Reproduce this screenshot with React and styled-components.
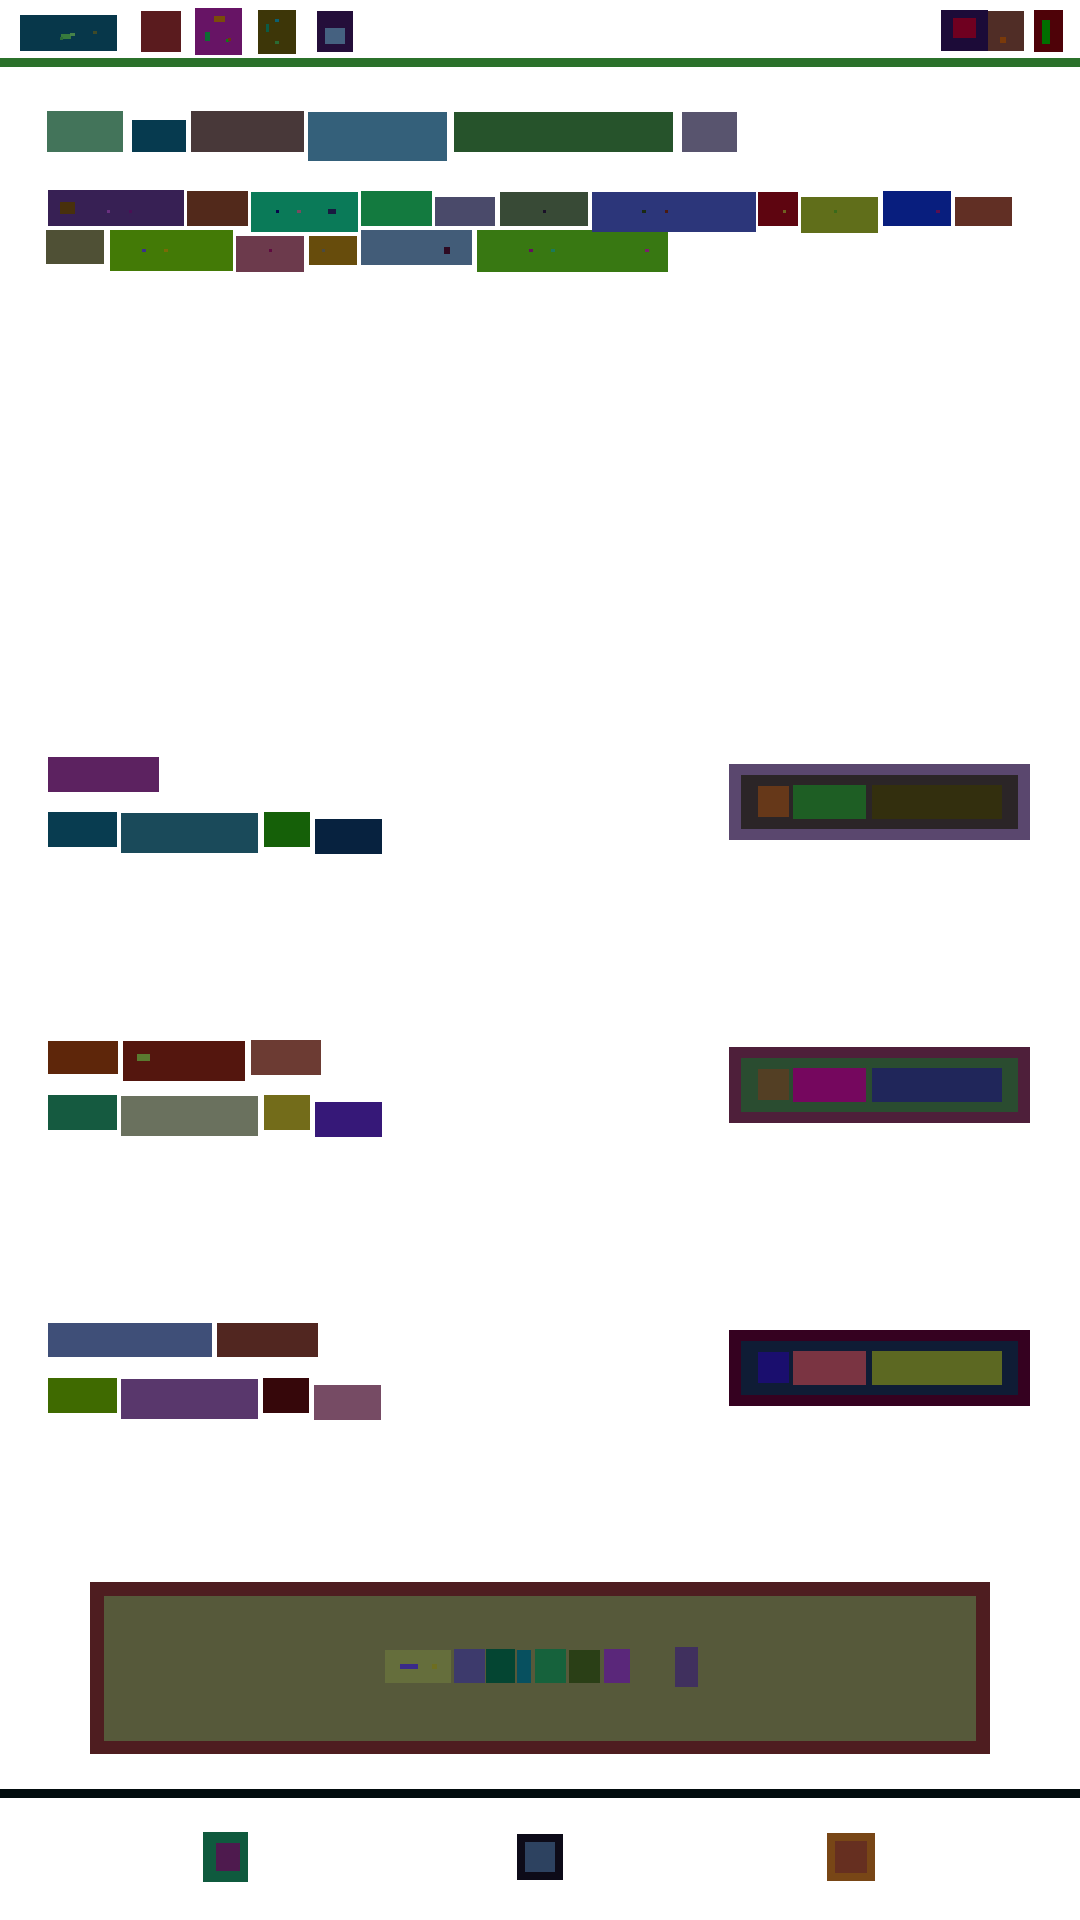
import React from "react";
import styled, { createGlobalStyle, css } from "styled-components";

const Global = createGlobalStyle`
  html, body { margin: 0; padding: 0; background: #ffffff; }
  #root { width: 1080px; }
`;

const tile = css`
  flex: none;
  display: flex;
  align-items: flex-start;
  box-sizing: border-box;
  width: ${(p) => p.$w}px;
  height: ${(p) => p.$h}px;
  margin-left: ${(p) => p.$ml}px;
  margin-top: ${(p) => p.$mt}px;
  background: ${(p) => p.$c};
`;

const Page = styled.div`
  display: flex;
  flex-direction: column;
  width: 1080px;
  height: 1920px;
  overflow: hidden;
  background: #ffffff;
`;
const Header = styled.header`
  flex: none;
  display: flex;
  justify-content: space-between;
  align-items: flex-start;
  height: 58px;
  padding: 0 17px 0 20px;
`;
const Nav = styled.nav`
  display: flex;
  align-items: flex-start;
`;
const NavTile = styled.div`${tile}`;
const Mark = styled.span`${tile}`;
const Rule = styled.div`
  flex: none;
  height: 9px;
  background: ${(p) => p.$c};
`;
const Hero = styled.section`
  flex: none;
  display: flex;
  flex-direction: column;
  height: 690px;
  padding: 44px 0 0 0;
  box-sizing: border-box;
`;
const Line = styled.div`
  position: relative;
  z-index: ${(p) => p.$z || 0};
  flex: none;
  display: flex;
  align-items: flex-start;
  height: ${(p) => p.$h}px;
`;
const Word = styled.div`${tile}`;
const Feature = styled.section`
  flex: none;
  display: flex;
  justify-content: space-between;
  align-items: flex-start;
  height: ${(p) => p.$h}px;
  padding-right: 50px;
`;
const Copy = styled.div`
  display: flex;
  flex-direction: column;
`;
const Preview = styled.div`
  flex: none;
  box-sizing: border-box;
  width: 301px;
  height: 76px;
  margin-top: 7px;
  padding: 11px 12px;
  background: ${(p) => p.$c};
`;
const PreviewInner = styled.div`
  display: flex;
  align-items: flex-start;
  width: 277px;
  height: 54px;
  background: ${(p) => p.$c};
`;
const PreviewCell = styled.div`${tile}`;
const Banner = styled.section`
  flex: none;
  box-sizing: border-box;
  width: 900px;
  height: 172px;
  margin: 0 0 35px 90px;
  padding: 14px;
  background: #4e1d20;
`;
const BannerInner = styled.div`
  display: flex;
  align-items: flex-start;
  width: 872px;
  height: 145px;
  background: #56593a;
`;
const BannerItem = styled.div`${tile}`;
const Footer = styled.footer`
  flex: none;
  display: flex;
  align-items: flex-start;
  height: 122px;
`;
const FootIcon = styled.div`${tile}`;

function flow(Comp, list, ox, oy) {
  let cursor = ox;
  return list.map(([x0, x1, y0, y1, c, marks], i) => {
    const el = (
      <Comp key={i} $w={x1 - x0} $h={y1 - y0} $c={c} $ml={x0 - cursor} $mt={y0 - oy}>
        {marks ? flow(Mark, marks, x0, y0) : null}
      </Comp>
    );
    cursor = x1;
    return el;
  });
}

const navLeft = [
  [20, 117, 15, 51, "#07374a", [
    [61, 71, 34, 39, "#377a3d"],
    [70, 75, 33, 36, "#46824a"],
    [60, 63, 37, 40, "#2a6a38"],
    [93, 97, 31, 34, "#3f4a28"],
  ]],
  [141, 181, 11, 52, "#5a1b1e"],
  [195, 242, 8, 55, "#671465", [
    [205, 210, 32, 41, "#0e6c33"],
    [214, 225, 16, 22, "#7a4c0a"],
    [226, 229, 39, 42, "#0f7a1a"],
    [228, 231, 38, 41, "#6f3510"],
  ]],
  [258, 296, 10, 54, "#3d3608", [
    [266, 269, 24, 32, "#0c5b45"],
    [275, 279, 19, 22, "#0d6070"],
    [275, 279, 41, 44, "#2a6b33"],
  ]],
  [317, 353, 11, 52, "#240e3a", [[325, 345, 28, 44, "#456180"]]],
];
const navRight = [
  [941, 988, 10, 51, "#1c0b38", [[953, 976, 18, 38, "#6f0020"]]],
  [988, 1024, 11, 51, "#502d26", [[1000, 1006, 37, 43, "#7a3a0a"]]],
  [1034, 1063, 10, 52, "#4e0208", [[1042, 1050, 20, 44, "#006f00"]]],
];

const heroA = [
  [47, 123, 111, 152, "#43745a"],
  [132, 186, 120, 152, "#063a4f"],
  [191, 304, 111, 152, "#483839"],
  [308, 447, 112, 161, "#34607a"],
  [454, 673, 112, 152, "#26532b"],
  [682, 737, 112, 152, "#58546e"],
];
const heroB = [
  [48, 184, 190, 226, "#372054", [
    [60, 75, 202, 214, "#48300c"],
    [107, 110, 210, 213, "#6a3080"],
    [129, 132, 210, 213, "#4a0f55"],
  ]],
  [187, 248, 191, 226, "#52291b"],
  [251, 358, 192, 232, "#0a7a58", [
    [276, 279, 210, 213, "#05064a"],
    [297, 301, 210, 213, "#7a4a60"],
    [328, 336, 209, 214, "#181a40"],
  ]],
  [361, 432, 191, 226, "#137a3f"],
  [435, 495, 197, 226, "#4a4a6a"],
  [500, 588, 192, 226, "#384a36", [[543, 546, 210, 213, "#1a1028"]]],
  [592, 756, 192, 232, "#2c367a", [
    [642, 646, 210, 213, "#1a2a12"],
    [665, 668, 210, 213, "#4a1a10"],
  ]],
  [758, 798, 192, 226, "#5e0510", [[783, 786, 210, 213, "#6f6020"]]],
  [801, 878, 197, 233, "#606e1a", [[834, 837, 210, 213, "#3a6a1a"]]],
  [883, 951, 191, 226, "#081e7e", [[936, 940, 210, 213, "#5a0f50"]]],
  [955, 1012, 197, 226, "#612f24"],
];
const heroC = [
  [46, 104, 230, 264, "#4f5035"],
  [110, 233, 230, 271, "#437a06", [
    [142, 146, 249, 252, "#3a2f8a"],
    [164, 168, 249, 252, "#7a6a06"],
  ]],
  [236, 304, 236, 272, "#6c3a4c", [[269, 272, 249, 252, "#5f0a40"]]],
  [309, 357, 236, 265, "#674c0c", [[322, 325, 249, 252, "#4a4a40"]]],
  [361, 472, 230, 265, "#425c78", [[444, 450, 247, 254, "#2e0a22"]]],
  [477, 668, 230, 272, "#387812", [
    [529, 533, 249, 252, "#65105e"],
    [551, 555, 249, 252, "#1a7a5a"],
    [645, 649, 249, 252, "#7a1f6a"],
  ]],
];

const features = [
  {
    top: 757,
    height: 283,
    title: [[48, 159, 757, 792, "#5c2260"]],
    body: [
      [48, 117, 812, 847, "#083c50"],
      [121, 258, 813, 853, "#1a4a5a"],
      [264, 310, 812, 847, "#156008"],
      [315, 382, 819, 854, "#07223f"],
    ],
    outer: "#5a476e",
    inner: "#2b2527",
    cells: ["#663819", "#1e5e24", "#332f0e"],
  },
  {
    top: 1040,
    height: 283,
    title: [
      [48, 118, 1041, 1074, "#5e260a"],
      [123, 245, 1041, 1081, "#54160e", [[137, 150, 1054, 1061, "#5a7a30"]]],
      [251, 321, 1040, 1075, "#6c3b33"],
    ],
    body: [
      [48, 117, 1095, 1130, "#155a40"],
      [121, 258, 1096, 1136, "#6a715e"],
      [264, 310, 1095, 1130, "#736c1a"],
      [315, 382, 1102, 1137, "#361878"],
    ],
    outer: "#4e1f3a",
    inner: "#2a4c30",
    cells: ["#533f24", "#75075e", "#20265a"],
  },
  {
    top: 1323,
    height: 259,
    title: [
      [48, 212, 1323, 1357, "#3f4f78"],
      [217, 318, 1323, 1357, "#512620"],
    ],
    body: [
      [48, 117, 1378, 1413, "#3f6a00"],
      [121, 258, 1379, 1419, "#59376c"],
      [263, 309, 1378, 1413, "#36070a"],
      [314, 381, 1385, 1420, "#764b64"],
    ],
    outer: "#350120",
    inner: "#0f1c35",
    cells: ["#1a0e6e", "#7a3442", "#5c6822"],
  },
];

const cellGeometry = [
  [17, 48, 11, 42],
  [52, 125, 10, 44],
  [131, 261, 10, 44],
];

const bannerItems = [
  [385, 451, 1650, 1683, "#656e3c", [
    [400, 418, 1664, 1669, "#3a2a8a"],
    [432, 437, 1664, 1669, "#6e6e20"],
  ]],
  [454, 485, 1649, 1683, "#3d3a6c"],
  [486, 515, 1649, 1683, "#044532"],
  [517, 531, 1650, 1683, "#07505f"],
  [535, 566, 1649, 1683, "#16623c"],
  [569, 600, 1650, 1683, "#2a3f16"],
  [604, 630, 1649, 1683, "#5a277a"],
  [675, 698, 1647, 1687, "#40305e"],
];

const footIcons = [
  [203, 248, 1832, 1882, "#0f5a3e", [[216, 240, 1843, 1871, "#4e1a4e"]]],
  [517, 563, 1834, 1880, "#0d0b18", [[525, 555, 1842, 1872, "#2d4260"]]],
  [827, 875, 1833, 1881, "#784616", [[835, 867, 1841, 1873, "#662f20"]]],
];

export default function App() {
  return (
    <Page>
      <Global />
      <Header>
        <Nav>{flow(NavTile, navLeft, 20, 0)}</Nav>
        <Nav>{flow(NavTile, navRight, 941, 0)}</Nav>
      </Header>
      <Rule $c="#2b712b" />
      <Hero>
        <Line $h={79}>{flow(Word, heroA, 0, 111)}</Line>
        <Line $h={40} $z={1}>{flow(Word, heroB, 0, 190)}</Line>
        <Line $h={42}>{flow(Word, heroC, 0, 230)}</Line>
      </Hero>
      {features.map((f) => (
        <Feature key={f.top} $h={f.height}>
          <Copy>
            <Line $h={55}>{flow(Word, f.title, 0, f.top)}</Line>
            <Line $h={42}>{flow(Word, f.body, 0, f.top + 55)}</Line>
          </Copy>
          <Preview $c={f.outer}>
            <PreviewInner $c={f.inner}>
              {flow(
                PreviewCell,
                cellGeometry.map((g, i) => [...g, f.cells[i]]),
                0,
                0
              )}
            </PreviewInner>
          </Preview>
        </Feature>
      ))}
      <Banner>
        <BannerInner>{flow(BannerItem, bannerItems, 104, 1596)}</BannerInner>
      </Banner>
      <Rule $c="#020c0e" />
      <Footer>{flow(FootIcon, footIcons, 0, 1798)}</Footer>
    </Page>
  );
}
